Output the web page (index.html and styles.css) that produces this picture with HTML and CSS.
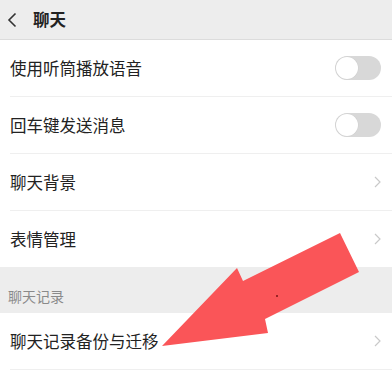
FILE: index.html
```html
<!DOCTYPE html>
<html lang="zh-CN">
<head>
<meta charset="utf-8">
<link rel="stylesheet" href="styles.css">
</head>
<body>
<div class="page">
  <header class="topbar">
    <svg class="back" width="10" height="16" viewBox="0 0 10 16"><path d="M8.5 1.5 L2 8 L8.5 14.5" fill="none" stroke="#333" stroke-width="1.6"/></svg>
    <span class="title">聊天</span>
  </header>
  <section class="group">
    <div class="row"><span class="label">使用听筒播放语音</span><span class="toggle"><span class="knob"></span></span></div>
    <div class="row"><span class="label">回车键发送消息</span><span class="toggle"><span class="knob"></span></span></div>
    <div class="row"><span class="label">聊天背景</span><svg class="chev" width="7" height="12" viewBox="0 0 7 12"><path d="M1 1 L6 6 L1 11" fill="none" stroke="#c9c9c9" stroke-width="1.2"/></svg></div>
    <div class="row last"><span class="label">表情管理</span><svg class="chev" width="7" height="12" viewBox="0 0 7 12"><path d="M1 1 L6 6 L1 11" fill="none" stroke="#c9c9c9" stroke-width="1.2"/></svg></div>
  </section>
  <div class="section-title">聊天记录</div>
  <section class="group">
    <div class="row"><span class="label">聊天记录备份与迁移</span><svg class="chev" width="7" height="12" viewBox="0 0 7 12"><path d="M1 1 L6 6 L1 11" fill="none" stroke="#c9c9c9" stroke-width="1.2"/></svg></div>
  </section>
  <svg class="arrow" width="392" height="379" viewBox="0 0 392 379">
    <polygon points="162,346 237,268 243,281 340,233 359,272 265,319 268,333" fill="#fa5558"/>
    <circle cx="277" cy="296" r="1" fill="#7a1515"/>
  </svg>
</div>
</body>
</html>
```
FILE: styles.css
```css
html, body {
  margin: 0;
  padding: 0;
  background: #ffffff;
}
body {
  font-family: "Noto Sans CJK SC", "Noto Sans", sans-serif;
  color: #222;
}
.page {
  position: relative;
  width: 392px;
  height: 379px;
  overflow: hidden;
}
.topbar {
  height: 39px;
  background: #ededed;
  border-bottom: 1px solid #dcdcdc;
  display: flex;
  align-items: center;
  padding-left: 7px;
  gap: 16px;
}
.back {
  display: block;
  margin-top: 1px;
}
.title {
  font-size: 16.5px;
  font-weight: 700;
  color: #222;
  line-height: 1;
}
.group {
  background: #fff;
  display: flex;
  flex-direction: column;
}
.row {
  height: 56px;
  margin-left: 10px;
  padding-right: 11px;
  display: flex;
  align-items: center;
  justify-content: space-between;
  border-bottom: 1px solid #efefef;
}
.row.last {
  border-bottom: none;
}
.label {
  font-size: 16.5px;
  line-height: 1;
}
.toggle {
  width: 46px;
  height: 24px;
  border-radius: 12px;
  background: #d8d8d8;
  display: flex;
  align-items: center;
  padding-left: 1px;
  box-sizing: border-box;
}
.knob {
  width: 22px;
  height: 22px;
  border-radius: 50%;
  background: #fff;
  box-shadow: 0 0 0 0.5px #cfcfcf;
}
.chev {
  display: block;
}
.section-title {
  height: 46px;
  background: #ededed;
  box-sizing: border-box;
  padding-left: 8px;
  display: flex;
  align-items: center;
  padding-top: 12px;
  font-size: 14px;
  color: #8a8a8a;
}
.arrow {
  position: absolute;
  left: 0;
  top: 0;
  pointer-events: none;
}
```
